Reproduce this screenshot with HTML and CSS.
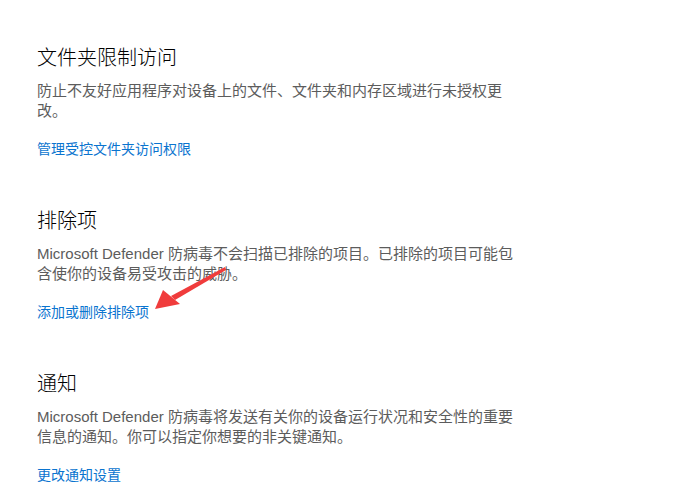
FILE: index.html
```html
<!DOCTYPE html>
<html lang="zh-CN">
<head>
<meta charset="utf-8">
<link rel="stylesheet" href="styles.css">
</head>
<body>
<main class="page">
  <section class="group">
    <h2 class="title">文件夹限制访问</h2>
    <p class="desc">防止不友好应用程序对设备上的文件、文件夹和内存区域进行未授权更改。</p>
    <a class="link" href="#">管理受控文件夹访问权限</a>
  </section>
  <section class="group">
    <h2 class="title">排除项</h2>
    <p class="desc">Microsoft Defender 防病毒不会扫描已排除的项目。已排除的项目可能包含使你的设备易受攻击的威胁。</p>
    <a class="link" href="#">添加或删除排除项</a>
  </section>
  <section class="group">
    <h2 class="title">通知</h2>
    <p class="desc">Microsoft Defender 防病毒将发送有关你的设备运行状况和安全性的重要信息的通知。你可以指定你想要的非关键通知。</p>
    <a class="link" href="#">更改通知设置</a>
  </section>
</main>
<svg class="arrow" width="683" height="504" viewBox="0 0 683 504" aria-hidden="true">
  <polygon points="225,267 226,270 175,300 171,296" fill="#f03c3c"/>
  <polygon points="155,309 163,290 180,304" fill="#f03c3c"/>
</svg>
</body>
</html>
```
FILE: styles.css
```css
html, body {
  margin: 0;
  padding: 0;
  background: #ffffff;
}
body {
  font-family: "Liberation Sans", "Noto Sans CJK SC", sans-serif;
  width: 683px;
  height: 504px;
  overflow: hidden;
  position: relative;
}
.page {
  padding: 44px 0 0 37px;
  display: flex;
  flex-direction: column;
  gap: 48px;
}
.group {
  display: flex;
  flex-direction: column;
  align-items: flex-start;
}
.title {
  margin: 0;
  font-size: 20px;
  line-height: 28px;
  font-weight: 300;
  color: #000000;
}
.desc {
  margin: 9px 0 0 0;
  width: 478px;
  font-size: 15px;
  line-height: 20px;
  color: #5c5c5c;
}
.link {
  margin-top: 18px;
  font-size: 14px;
  line-height: 20px;
  color: #0a74cf;
  text-decoration: none;
}
.arrow {
  position: absolute;
  left: 0;
  top: 0;
  pointer-events: none;
}
```
